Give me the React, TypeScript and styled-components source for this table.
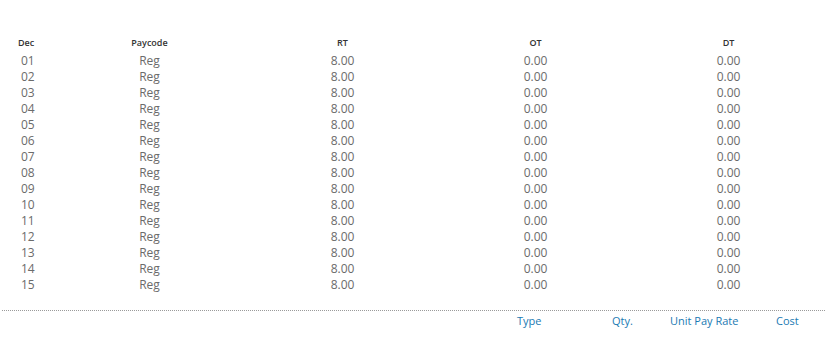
import { Fragment } from "react";
import styled, { createGlobalStyle } from "styled-components";

const GlobalStyle = createGlobalStyle`
  body {
    margin: 0;
    background: #ffffff;
    font-family: "Open Sans", "Noto Sans", sans-serif;
  }
`;

const Page = styled.div`
  display: flex;
  flex-direction: column;
  width: 825px;
  padding: 33px 0 0 2px;
  box-sizing: border-box;
`;

const Table = styled.div`
  display: grid;
  grid-template-columns: 45px repeat(4, 1fr);
  margin-left: 6px;
`;

const HeadCell = styled.div<{ $align?: "left" | "center" }>`
  height: 20px;
  line-height: 19px;
  font-size: 9px;
  font-weight: 600;
  color: #333333;
  text-align: ${(p) => p.$align ?? "center"};
  padding-left: ${(p) => (p.$align === "left" ? "10px" : "0")};
`;

const Cell = styled.div<{ $align?: "left" | "center" }>`
  height: 16px;
  line-height: 16px;
  font-size: 12px;
  color: #6b6b6b;
  text-align: ${(p) => p.$align ?? "center"};
  padding-left: ${(p) => (p.$align === "left" ? "13px" : "0")};
`;

const Divider = styled.div`
  margin-top: 17px;
  border-top: 1px dotted #9a9a9a;
`;

const Footer = styled.div`
  display: grid;
  grid-template-columns: 1fr 95px 58px 106px 49px;
  height: 19px;
  align-items: center;
`;

const FooterLabel = styled.div`
  font-size: 11px;
  color: #1a7ab3;
`;

const days = Array.from({ length: 15 }, (_, i) => String(i + 1).padStart(2, "0"));

export default function App() {
  return (
    <>
      <GlobalStyle />
      <Page>
        <Table>
          <HeadCell $align="left">Dec</HeadCell>
          <HeadCell>Paycode</HeadCell>
          <HeadCell>RT</HeadCell>
          <HeadCell>OT</HeadCell>
          <HeadCell>DT</HeadCell>
          {days.map((d) => (
            <Fragment key={d}>
              <Cell $align="left">{d}</Cell>
              <Cell>Reg</Cell>
              <Cell>8.00</Cell>
              <Cell>0.00</Cell>
              <Cell>0.00</Cell>
            </Fragment>
          ))}
        </Table>
        <Divider />
        <Footer>
          <div />
          <FooterLabel>Type</FooterLabel>
          <FooterLabel>Qty.</FooterLabel>
          <FooterLabel>Unit Pay Rate</FooterLabel>
          <FooterLabel>Cost</FooterLabel>
        </Footer>
      </Page>
    </>
  );
}
